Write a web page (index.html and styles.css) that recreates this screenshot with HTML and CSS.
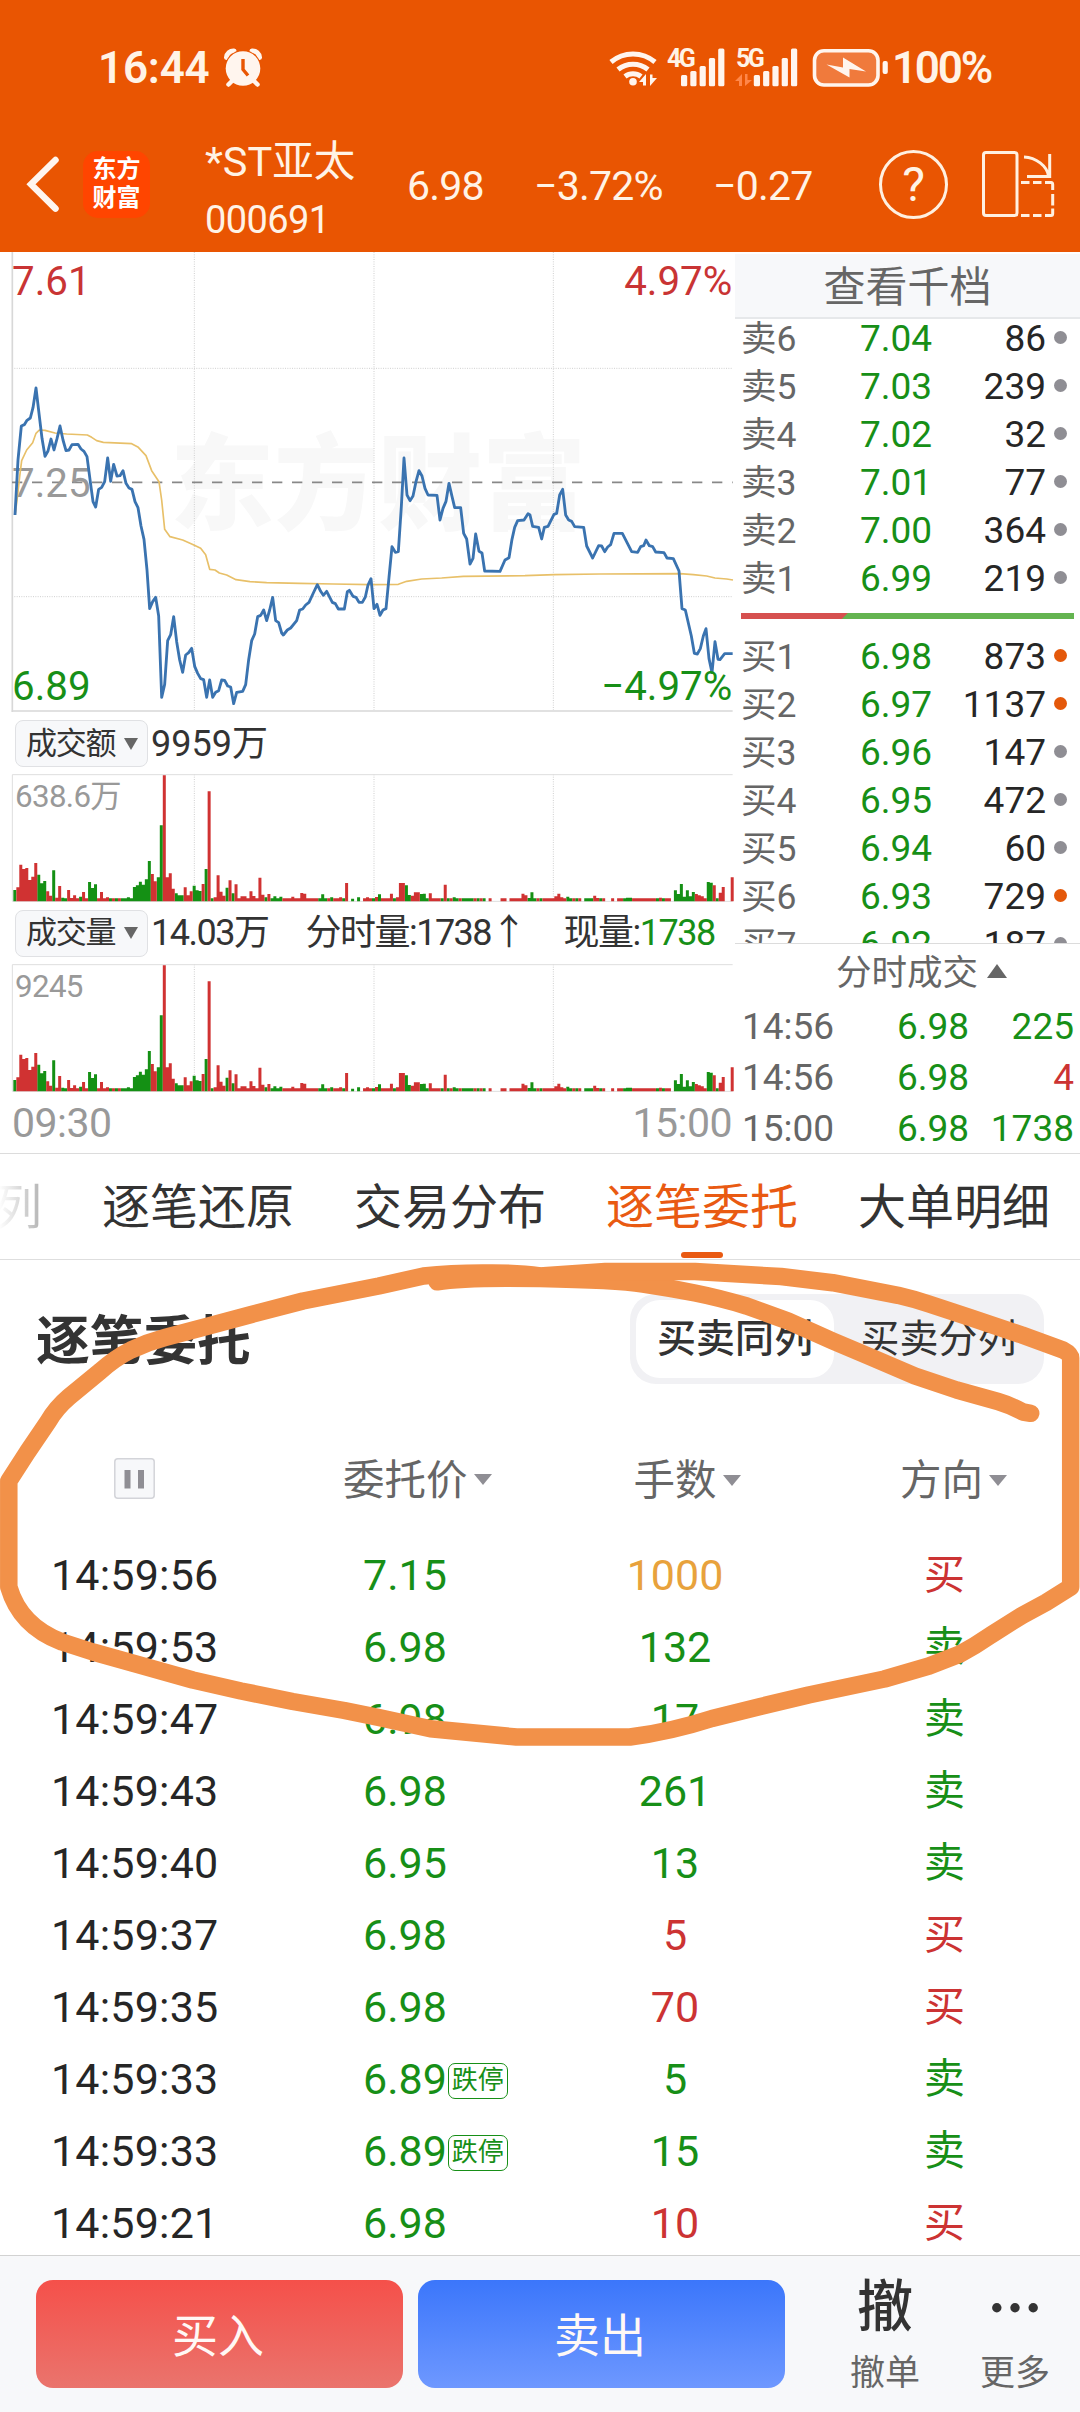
FILE: index.html
```html
<!DOCTYPE html>
<html lang="zh-CN">
<head>
<meta charset="utf-8">
<title>*ST亚太 000691</title>
<link rel="stylesheet" href="styles.css">
</head>
<body>
<div class="app">
  <header class="header">
    <div class="status">
      <span class="clock">16:44</span>
      <svg class="alarm" width="38" height="40" viewBox="0 0 38 40">
        <g fill="none" stroke="#fff5ee" stroke-linecap="round">
          <path d="M2.500 9.500A7 7 0 0 1 10 3M35.500 9.500A7 7 0 0 0 28 3" stroke-width="5"/>
        </g>
        <circle cx="19" cy="20.500" r="18.500" fill="#e95502"/>
        <path d="M9 32l-4.500 4.500M29 32l4.500 4.500" stroke="#fff5ee" stroke-width="4.500" stroke-linecap="round"/>
        <circle cx="19" cy="20.500" r="17.300" fill="#fff5ee"/>
        <path d="M19 11v10.500l5 6" fill="none" stroke="#e95502" stroke-width="3.400"/>
      </svg>
      <span class="status-right">
        <svg width="48" height="40" viewBox="608 48 48 40">
          <g fill="none" stroke="#fff5ee" stroke-width="5">
            <path d="M610 62A34 34 0 0 1 654 62"/>
            <path d="M617 69.500A24 24 0 0 1 647 69.500"/>
            <path d="M624 76.500A13 13 0 0 1 640 76.500"/>
          </g>
          <circle cx="632" cy="81.700" r="3.800" fill="#fff5ee"/>
          <path d="M638 82l7-8v11.500h-3V82zM656 78l-7 8V74.500h2.500V78z" fill="#fff5ee"/>
        </svg>
        <span class="cell cell-4g"><b>4G</b>
          <svg width="54" height="40" viewBox="680 48 54 40" fill="#fff5ee"><rect x="680" y="75" width="6.200" height="11.300" rx="1.500"/><rect x="689.300" y="71" width="6.200" height="15.300" rx="1.500"/><rect x="698.600" y="66" width="6.200" height="20.300" rx="1.500"/><rect x="707.900" y="58" width="6.200" height="28.300" rx="1.500"/><rect x="717.200" y="48.500" width="6.200" height="37.800" rx="1.500"/></svg>
        </span>
        <span class="cell cell-5g"><b>5G</b>
          <svg width="64" height="40" viewBox="733 48 64 40" fill="#fff5ee"><path d="M734 81l7-7v12h-3v-5zM751 80l-7 6V74h2.500v6z" fill="#ff874a"/><rect x="752.800" y="75" width="6.200" height="11.300" rx="1.500"/><rect x="762.100" y="71" width="6.200" height="15.300" rx="1.500"/><rect x="771.400" y="66" width="6.200" height="20.300" rx="1.500"/><rect x="780.700" y="58" width="6.200" height="28.300" rx="1.500"/><rect x="790" y="48.500" width="6.200" height="37.800" rx="1.500"/></svg>
        </span>
        <svg class="battery" width="77" height="40" viewBox="811 48 77 40">
          <rect x="813.500" y="50.700" width="63.500" height="34.300" rx="9.500" fill="#f07a3c" stroke="#fff5ee" stroke-width="3.600"/>
          <rect x="881.600" y="61" width="5.200" height="13" rx="2" fill="#fff5ee"/>
          <path d="M825.500 64.500L842 67.500V57.500L865 71.500L848.500 69V77.500z" fill="#fff5ee"/>
        </svg>
        <span class="percent">100%</span>
      </span>
    </div>
    <div class="titlebar">
      <svg class="back" width="36" height="60" viewBox="26 154 36 60"><path d="M55.500 160L31 184.300L55.500 208.600" fill="none" stroke="#fff5ee" stroke-width="6.500" stroke-linecap="round"/></svg>
      <div class="logo"><span>东方</span><span>财富</span></div>
      <div class="stock"><div class="name">*ST亚太</div><div class="code">000691</div></div>
      <span class="quote q-price">6.98</span>
      <span class="quote q-pct">−3.72%</span>
      <span class="quote q-diff">−0.27</span>
      <div class="help">?</div>
      <svg class="rotate" width="76" height="70" viewBox="981 149 76 70" fill="none" stroke="#fff0e0" stroke-width="3">
        <rect x="983.500" y="152.500" width="33.500" height="63" rx="2.500"/>
        <path d="M1024 157C1036 157.500 1047 166 1048.500 176M1049.700 154V176.500H1027"/>
        <path d="M1021 182.500h8.500M1033 182.500h8.500M1045 182.500h6q1.700 0 1.700 2v5.500M1052.700 194v11.500M1052.700 208.500v5q0 2-1.700 2h-6M1041.500 215.500h-8.500M1029.500 215.500h-8.500"/>
      </svg>
    </div>
  </header>

  <section class="market">
    <div class="charts">
      <svg class="price-chart" width="735" height="461" viewBox="0 6 2205 1383">
        <text class="watermark" x="510" y="815">东方财富</text>
        <g class="grid">
          <path d="M583 6V1380M1122 6V1380M1660 6V1380M36 355H2198M36 1040H2198"/>
        </g>
        <path class="frame" d="M37 6V1386M34 1383H2198"/>
        <path class="midline" d="M36 697H2198"/>
        <text class="lbl gray" x="36" y="741">7.25</text>
        <path class="avg" d="M46 790L53 735L59 680L65 632L80 600L98 578L108 550L118 540L135 541L165 549L200 552L262 555L275 562L290 572L310 577L395 581L415 592L438 617L455 662L477 695L485 750L494 838L510 860L548 870L580 884L602 895L617 914L629 958L645 960L658 969L680 975L708 989L750 995L800 998L900 1000L1000 1002L1110 1004L1195 1003L1220 994L1265 987L1325 984L1390 979L1575 977L1665 974L1800 972L2040 971L2080 974L2120 978L2145 984L2180 987L2199 990"/>
        <path class="price" d="M45 795L54 630L64 528L73 524L81 511L91 504L99 473L108 414L117 490L126 565L135 619L144 603L153 567L162 600L171 566L180 528L189 570L198 602L207 600L216 584L234 583L243 597L252 604L261 620L270 688L279 755L287 771L296 718L305 712L314 695L323 624L332 694L341 643L351 678L360 677L369 662L378 700L387 714L396 718L405 755L414 773L423 828L432 868L441 960L449 1076L458 1055L467 1042L476 1098L485 1342L494 1303L503 1172L512 1154L521 1100L530 1175L539 1230L548 1267L557 1215L566 1208L575 1195L584 1249L593 1270L602 1286L611 1289L620 1342L629 1290L638 1342L647 1327L656 1322L665 1290L674 1291L683 1308L692 1311L701 1361L710 1327L728 1324L737 1304L746 1229L755 1172L764 1152L773 1100L782 1096L791 1080L800 1112L809 1080L818 1042L827 1112L836 1118L845 1149L850 1155L862 1140L872 1134L890 1112L899 1080L908 1077L917 1065L927 1057L940 1029L952 1004L962 1024L970 1036L980 1024L997 1057L1006 1061L1015 1077L1033 1077L1042 1025L1048 1021L1059 1039L1068 1042L1077 1057L1087 1057L1096 1041L1104 1005L1113 986L1122 1076L1131 1063L1140 1096L1149 1080L1158 1076L1167 982L1176 890L1186 907L1195 905L1204 770L1212 624L1221 735L1230 752L1239 738L1248 695L1257 662L1266 678L1275 715L1284 735L1311 736L1320 810L1329 775L1338 754L1347 700L1356 739L1364 773L1382 773L1391 850L1400 867L1410 942L1419 925L1427 852L1437 904L1446 909L1454 963L1500 964L1515 930L1527 923L1536 868L1544 832L1553 812L1572 810L1584 791L1590 795L1598 829L1616 832L1625 867L1633 832L1644 829L1662 793L1670 790L1679 735L1688 718L1697 795L1706 810L1715 814L1724 830L1751 832L1760 888L1778 924L1796 887L1805 888L1814 905L1823 891L1832 884L1842 850L1867 850L1895 905L1913 907L1922 890L1931 887L1938 870L1948 887L1958 890L1967 906L1992 908L2001 924L2020 926L2037 963L2046 1076L2056 1080L2074 1158L2083 1210L2092 1212L2101 1196L2110 1158L2118 1136L2127 1226L2136 1268L2145 1175L2154 1228L2160 1229L2174 1211L2198 1211"/>
        <text class="lbl red" x="36" y="134">7.61</text>
        <text class="lbl red end" x="2197" y="134">4.97%</text>
        <text class="lbl green" x="36" y="1349">6.89</text>
        <text class="lbl green end" x="2197" y="1349">−4.97%</text>
      </svg>

      <div class="indicator">
        <span class="pill">成交额<i></i></span><span class="turnover">9959万</span>
      </div>
      <svg class="volume" width="735" height="128" viewBox="0 222 2205 384">
        <path class="grid" d="M583 223V604M1122 223V604M1660 223V604"/>
        <path class="pane" d="M2198 224H37V604H2198"/>
        <text class="small" x="45" y="321">638.6万</text>
        <g class="bars"></g>
      </svg>
      <div class="indicator tight">
        <span class="pill">成交量<i></i></span><span>14.03万</span><span class="minute">分时量:1738↑</span><span class="current">现量:<em>1738</em></span>
      </div>
      <svg class="volume" width="735" height="128" viewBox="0 222 2205 384">
        <path class="grid" d="M583 223V604M1122 223V604M1660 223V604"/>
        <path class="pane" d="M2198 224H37V604H2198"/>
        <text class="small" x="45" y="320">9245</text>
        <g class="bars"></g>
      </svg>
      <div class="axis"><span>09:30</span><span>15:00</span></div>
    </div>

    <aside class="book">
      <div class="depth-title">查看千档</div>
      <div class="levels">
        <div class="level"><span>卖6</span><b>7.04</b><span>86</span><i></i></div>
        <div class="level"><span>卖5</span><b>7.03</b><span>239</span><i></i></div>
        <div class="level"><span>卖4</span><b>7.02</b><span>32</span><i></i></div>
        <div class="level"><span>卖3</span><b>7.01</b><span>77</span><i></i></div>
        <div class="level"><span>卖2</span><b>7.00</b><span>364</span><i></i></div>
        <div class="level"><span>卖1</span><b>6.99</b><span>219</span><i></i></div>
        <div class="ratio"></div>
        <div class="level"><span>买1</span><b>6.98</b><span>873</span><i class="hot"></i></div>
        <div class="level"><span>买2</span><b>6.97</b><span>1137</span><i class="hot"></i></div>
        <div class="level"><span>买3</span><b>6.96</b><span>147</span><i></i></div>
        <div class="level"><span>买4</span><b>6.95</b><span>472</span><i></i></div>
        <div class="level"><span>买5</span><b>6.94</b><span>60</span><i></i></div>
        <div class="level"><span>买6</span><b>6.93</b><span>729</span><i class="hot"></i></div>
        <div class="level"><span>买7</span><b>6.92</b><span>187</span><i></i></div>
      </div>
      <div class="ticks-title">分时成交<i></i></div>
      <div class="tick"><span>14:56</span><b>6.98</b><b>225</b></div>
      <div class="tick"><span>14:56</span><b>6.98</b><b class="red">4</b></div>
      <div class="tick"><span>15:00</span><b>6.98</b><b>1738</b></div>
    </aside>
  </section>

  <nav class="tabs">
    <span class="faded">列</span><span>逐笔还原</span><span>交易分布</span><span class="active">逐笔委托</span><span>大单明细</span>
  </nav>

  <main class="orders">
    <div class="orders-head">
      <h2>逐笔委托</h2>
      <div class="segment"><span class="on">买卖同列</span><span>买卖分列</span></div>
    </div>
    <div class="row thead">
      <span class="time"><svg class="pause" width="41" height="41" viewBox="0 0 41 41"><rect x=".8" y=".8" width="39.400" height="39.400" rx="3" fill="#f7f8fa" stroke="#d3d4d9" stroke-width="1.500"/><path d="M10.500 12h6v18.500h-6zM24 12h6v18.500h-6z" fill="#8f8e94"/></svg></span>
      <span class="cost">委托价<i></i></span><span class="lots">手数<i></i></span><span class="side">方向<i></i></span>
    </div>
    <div class="rows">
      <div class="row"><span class="time">14:59:56</span><span class="cost">7.15</span><span class="lots big">1000</span><span class="side buy">买</span></div>
      <div class="row"><span class="time">14:59:53</span><span class="cost">6.98</span><span class="lots">132</span><span class="side">卖</span></div>
      <div class="row"><span class="time">14:59:47</span><span class="cost">6.98</span><span class="lots">17</span><span class="side">卖</span></div>
      <div class="row"><span class="time">14:59:43</span><span class="cost">6.98</span><span class="lots">261</span><span class="side">卖</span></div>
      <div class="row"><span class="time">14:59:40</span><span class="cost">6.95</span><span class="lots">13</span><span class="side">卖</span></div>
      <div class="row"><span class="time">14:59:37</span><span class="cost">6.98</span><span class="lots buy">5</span><span class="side buy">买</span></div>
      <div class="row"><span class="time">14:59:35</span><span class="cost">6.98</span><span class="lots buy">70</span><span class="side buy">买</span></div>
      <div class="row"><span class="time">14:59:33</span><span class="cost">6.89<small>跌停</small></span><span class="lots">5</span><span class="side">卖</span></div>
      <div class="row"><span class="time">14:59:33</span><span class="cost">6.89<small>跌停</small></span><span class="lots">15</span><span class="side">卖</span></div>
      <div class="row"><span class="time">14:59:21</span><span class="cost">6.98</span><span class="lots buy">10</span><span class="side buy">买</span></div>
    </div>
  </main>

  <footer class="footer">
    <button class="btn buy-btn">买入</button>
    <button class="btn sell-btn">卖出</button>
    <div class="action cancel"><strong>撤</strong><span>撤单</span></div>
    <div class="action more"><svg width="50" height="56" viewBox="0 0 50 56" fill="#333"><circle cx="6.800" cy="27.700" r="4.700"/><circle cx="25" cy="27.700" r="4.700"/><circle cx="43.200" cy="27.700" r="4.700"/></svg><span>更多</span></div>
  </footer>

  <svg class="marker" width="1080" height="500" viewBox="0 1254 1080 500">
    <path d="M1030.700 1413.300L1023 1412Q1010 1405 998 1401.500L956.700 1390L915 1376L870.600 1357L832.700 1341L788 1321L746.600 1306Q720 1298 695 1293T643 1284T540 1278.500T437 1281.800"/>
    <path d="M423.600 1276Q454 1272.500 492 1273Q520 1273 540 1276L605.400 1271.600H695L781 1276.500L832.700 1282.700L898 1295.300Q914 1299 929 1304L970 1317.500L1022 1335L1063 1350Q1070.700 1354 1070.700 1358V1587L1046 1602.500L1022 1615.500L991 1635Q975 1646 960 1654L929 1666L884.400 1679L808.600 1695L760.400 1706.500L712 1718.500Q670 1732 630 1737H516.500L430.400 1728.800L378.800 1717.500L344.400 1710.500L292.700 1701.500L241 1691L192.800 1680L137.700 1664.500L93 1652L62 1642Q20 1626 8.800 1587V1481L27.500 1452L48.200 1421.500Q56 1408 68.900 1397L99.900 1371.500Q115 1358 131 1350Q148 1342 165 1337.500L206.600 1326.500L251.400 1314.500L303 1301L378.800 1286Z"/>
  </svg>
</div>
<script src="bars.js"></script>
</body>
</html>
```
FILE: styles.css
```css
* { box-sizing: border-box; }
body {
  margin: 0;
  background: #fff;
  color: #262626;
  font-family: Roboto, "Noto Sans CJK SC", sans-serif;
}
i, em { font-style: normal; }
.app {
  position: relative;
  width: 1080px;
  height: 2412px;
  overflow: hidden;
  display: flex;
  flex-direction: column;
}

/* header */
.header {
  height: 252px;
  flex: none;
  background: #e95502;
  color: #fff3e6;
}
.status {
  height: 136px;
  padding: 0 89px 0 98px;
  display: flex;
  align-items: center;
}
.clock { font-size: 44px; font-weight: 600; line-height: 52px; letter-spacing: -.2px; }
.alarm { margin-left: 14px; }
.status-right { display: flex; align-items: center; margin-left: auto; }
.cell { display: flex; position: relative; }
.cell-4g { margin-left: 24px; }
.cell-5g { margin-left: -1px; }
.cell b {
  position: absolute;
  top: 1px;
  left: -14px;
  font-size: 25px;
  line-height: 20px;
  letter-spacing: -2.500px;
}
.cell-5g b { left: 2px; }
.battery { margin-left: 14px; }
.percent { font-size: 44px; font-weight: 600; line-height: 52px; letter-spacing: -2.200px; margin-left: 3px; }
.titlebar {
  height: 96px;
  padding-left: 26px;
  display: flex;
  align-items: center;
}
.logo {
  width: 67px;
  height: 67px;
  margin-left: 21px;
  border-radius: 15px;
  background: #ff4500;
  display: flex;
  flex-direction: column;
  align-items: center;
  justify-content: center;
  font-weight: 700;
  font-size: 24px;
  line-height: 29px;
  color: #fff;
}
.stock { width: 202px; margin-left: 55px; padding-top: 14px; }
.name { font-size: 41.500px; line-height: 58px; }
.code { font-size: 38px; line-height: 58px; letter-spacing: -.6px; }
.quote { font-size: 41px; line-height: 60px; letter-spacing: -.8px; padding-top: 3px; }
.q-price { width: 127px; }
.q-pct { width: 179px; }
.q-diff { width: 166px; }
.help {
  width: 69px;
  height: 69px;
  border: 3px solid #fff0e0;
  border-radius: 50%;
  font-size: 48px;
  line-height: 63px;
  text-align: center;
}
.rotate { margin-left: 33px; }

/* market area */
.market {
  height: 902px;
  flex: none;
  display: flex;
  border-bottom: 1px solid #dcdcdc;
}
.charts { width: 735px; }
.charts > svg { display: block; }
.grid { fill: none; stroke: #cfcfcf; stroke-width: 3; stroke-dasharray: 3 4; }
.frame { fill: none; stroke: #d8d8d8; stroke-width: 5; }
.pane { fill: none; stroke: #dedede; stroke-width: 3; }
.midline { stroke: #888; stroke-width: 5; stroke-dasharray: 31 29; }
.avg { fill: none; stroke: #e8c069; stroke-width: 5; stroke-linejoin: round; }
.price { fill: none; stroke: #3a73b0; stroke-width: 8.500; stroke-linejoin: round; }
.lbl { font-size: 121px; }
.end { text-anchor: end; }
.gray { fill: #999; }
.lbl.red { fill: #c93434; }
.lbl.green { fill: #178f17; }
.watermark { font-size: 312px; font-weight: 900; fill: #f8f8f8; }
.small { font-size: 94px; letter-spacing: -2px; fill: #999; }
.bars { fill: none; stroke-width: 9; }
.bar-up { stroke: #d03232; }
.bar-down { stroke: #149014; }
.indicator {
  height: 61px;
  padding: 0 0 0 15px;
  display: flex;
  align-items: center;
  font-size: 36px;
  line-height: 50px;
  color: #333;
}
.tight { letter-spacing: -1.500px; height: 62px; }
.pill {
  width: 133px;
  height: 47px;
  padding-left: 10px;
  margin-right: 3px;
  border: 1px solid #e0e1e4;
  border-radius: 8px;
  background: #f7f8fa;
  display: flex;
  align-items: center;
  font-size: 31px;
  letter-spacing: -1.200px;
}
.pill i {
  margin-left: 9px;
  border: 7.500px solid transparent;
  border-top: 12px solid #666;
  border-bottom: 0;
}
.minute { margin-left: 37px; }
.current { margin-left: 38px; }
.current em { color: #178f17; }
.axis {
  height: 62px;
  padding: 0 3px 0 12px;
  display: flex;
  justify-content: space-between;
  font-size: 41px;
  line-height: 62px;
  letter-spacing: -.5px;
  color: #999;
}

/* order book */
.book { width: 345px; padding-top: 2px; color: #666; }
.depth-title {
  height: 65px;
  background: #f7f8fa;
  border-bottom: 2px solid #e6e8ea;
  text-align: center;
  font-size: 42px;
  line-height: 67px;
}
.levels { height: 625px; overflow: hidden; border-bottom: 1px solid #dcdcdc; }
.level {
  height: 48px;
  padding: 0 13px 0 6px;
  display: grid;
  grid-template-columns: 119px 89px 1fr 21px;
  align-items: center;
  font-size: 37px;
  line-height: 48px;
}
.level:first-child { height: 44px; padding-bottom: 4px; line-height: 40px; }
.level span:first-child { font-size: 35.500px; }
.level b, .tick b { font-weight: 400; color: #178f17; }
.level span:nth-child(3) { text-align: right; color: #262626; }
.level i {
  width: 13px;
  height: 13px;
  border-radius: 50%;
  background: #8f8e94;
  justify-self: end;
  margin-top: -3px;
}
.level i.hot { background: #e4580a; }
.ratio {
  height: 6px;
  margin: 10px 6px 14px;
  background: linear-gradient(135deg, #d6504f 75px, #64b450 76px);
}
.ticks-title {
  height: 58px;
  padding-left: 101px;
  display: flex;
  align-items: center;
  font-size: 35.500px;
  line-height: 58px;
}
.ticks-title i {
  margin-left: 9px;
  margin-top: -5px;
  border: 10.500px solid transparent;
  border-bottom: 14px solid #666;
  border-top: 0;
}
.tick {
  height: 50.800px;
  padding: 0 6px 0 7px;
  display: grid;
  grid-template-columns: 155px 80px 1fr;
  align-items: center;
  font-size: 37px;
  line-height: 50px;
}
.tick b:last-child { text-align: right; }
.tick b.red { color: #cc3333; }

/* tabs */
.tabs {
  height: 106px;
  flex: none;
  border-bottom: 1px solid #dedede;
  display: flex;
  gap: 60px;
  margin-left: -6px;
  font-size: 48px;
  line-height: 108px;
  color: #333;
  white-space: nowrap;
}
.faded {
  background: linear-gradient(90deg, #fff 10%, #bbb 90%);
  -webkit-background-clip: text;
  background-clip: text;
  color: transparent;
}
.active { color: #e95a12; position: relative; }
.active::after {
  content: "";
  position: absolute;
  left: 75px;
  bottom: 1px;
  width: 42px;
  height: 6px;
  border-radius: 3px;
  background: #e95a12;
}

/* orders */
.orders { height: 995px; flex: none; overflow: hidden; }
.orders-head {
  height: 157px;
  padding: 0 36px;
  display: flex;
  align-items: center;
  justify-content: space-between;
}
h2 { margin: 0; padding-top: 6px; font-size: 53.700px; font-weight: 700; line-height: 60px; color: #333; }
.segment {
  width: 414px;
  height: 90px;
  padding: 6px;
  border-radius: 26px;
  background: #f1f1f4;
  display: flex;
  color: #333;
  font-size: 39px;
  line-height: 78px;
}
.segment span { flex: 1; padding-left: 5px; text-align: center; }
.segment .on { flex: none; width: 198px; padding: 0; border-radius: 24px; background: #fff; font-weight: 500; }
.row {
  height: 72px;
  display: grid;
  grid-template-columns: 363px 180px 264px 1fr;
  align-items: center;
  font-size: 43px;
  line-height: 72px;
  color: #178f17;
}
.time { padding-left: 51px; color: #262626; letter-spacing: .2px; }
.cost { display: flex; align-items: center; white-space: nowrap; }
.lots { text-align: center; }
.lots.big { color: #e8a23c; }
.row .buy { color: #cc3333; }
.side { font-size: 41px; padding-left: 117px; }
small {
  margin-left: 1px;
  margin-top: 3px;
  width: 60px;
  height: 36px;
  border: 1px solid #178f17;
  border-radius: 7px;
  font-size: 26px;
  line-height: 32px;
  text-align: center;
}
.thead { height: 122px; }
.thead span { color: #666; font-size: 41.500px; padding-top: 5px; }
.thead i {
  display: inline-block;
  margin-left: 6px;
  vertical-align: 9px;
  border: 9px solid transparent;
  border-top: 11px solid #8f8e94;
  border-bottom: 0;
}
.thead .time { padding-left: 114px; padding-top: 0; }
.thead .cost { margin-left: -20px; }
.thead .cost i { margin-top: -3px; }
.thead .lots { padding-left: 24px; }
.thead .side { padding-left: 93px; }
.pause { display: block; }

/* footer */
.footer {
  height: 157px;
  flex: none;
  padding: 24px 0 0 36px;
  border-top: 1px solid #d2d2d2;
  background: #f7f8fa;
  display: flex;
  align-items: flex-start;
}
.btn {
  width: 367px;
  height: 108px;
  margin-right: 15px;
  padding: 0 3px 5px 0;
  border: 0;
  border-radius: 17px;
  color: #fff8f5;
  font: inherit;
  font-size: 46px;
}
.buy-btn { background: linear-gradient(#f5504a, #ea746d); }
.sell-btn { background: linear-gradient(#3b76fb, #6e98ff); }
.action {
  display: flex;
  flex-direction: column;
  align-items: center;
  width: 80px;
  color: #666;
  font-size: 35px;
  line-height: 76px;
}
.action strong { height: 56px; color: #333; font-size: 56px; font-weight: 500; line-height: 54px; }
.cancel { margin-left: 45px; }
.more { margin-left: 50px; }

/* hand-drawn highlight */
.marker {
  position: absolute;
  left: 0;
  top: 1254px;
  fill: none;
  stroke: #f29149;
  stroke-width: 17.500px;
  stroke-linecap: round;
  stroke-linejoin: round;
  pointer-events: none;
}
```
FILE: bars.js
```js
// One entry per trading minute: r = up, g = down, then the bar height; "-" is a minute without trades.
// "r9*4" repeats an entry.
const minutes = `g34 r42 r110 r97 r100 r64 r74 r115 g80 g54 g61 r30 r17 g93 r11 r46 g11 g9 r34 r10
r18 r9 g14 r28 r9 g58 g40 g51 r9 r28 r9 r12 g9 r9 g9 r9 g9*2 g12 g9 g43 g48 g59 g50 g66 g121 r82 r60 g72 g228
r378 r72 r84 r38 g24 g18 g18 r42 r18 r30 g47 g33 g31 r52 g97 r330 g9 r12 r78 r29 r17 g41 r63 g24 r51 r9 r15 r15
r9 r30 r16 r9 r71 r20 g12 r22 g9 g15 g9 g14 r9*3 r14 r9 r9 r25 r23 r9*4 g9 g21 g9 r9 g12 r9 r9 r12 g9 r55 -
g8 - g12 - r9 r12 r9 g9 r13 g21 r9*3 r23 g9 r12 r55 r55 g48 g19 r17 r27 r27 g22 g23 g9 r24 r9*2 r9 g9 r50 g9 r9
g12 g9 r9 g9*4 r9 g9 r9 g9 - r9 -*3 r9 r9 - r9*4 r23 r18 g10 g27 g9 r9 g9 r9*4 r15 r23 r12 r9 g14 g9 r9 g9 r9 -
g9*3 r17 r10 g9 r9 -*2 r9 - r9 r9 g9 g11 g11 r9*8 g9 r11 g9 r9 r9 - g33 g22 g52 g14 g33 g15 g28 r22 r18 r15 r9
g58 g56 r48 g9 r26 r43 -*2 r72`;

const paths = { r: "", g: "" };
let i = 0;
for (const token of minutes.split(/\s+/)) {
  const [entry, times] = token.split("*");
  for (let n = 0; n < Number(times || 1); n++, i++) {
    if (entry === "-") continue;
    const x = (44.5 + 8.967 * i).toFixed(1);
    paths[entry[0]] += `M${x} 604v-${entry.slice(1)}`;
  }
}
document.querySelectorAll(".bars").forEach((group) => {
  group.innerHTML = `<path class="bar-down" d="${paths.g}"/><path class="bar-up" d="${paths.r}"/>`;
});
```
